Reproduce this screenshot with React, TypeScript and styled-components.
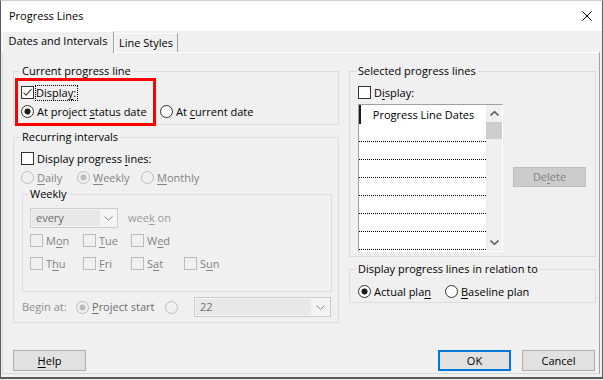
import React from "react";
import styled, { createGlobalStyle, css } from "styled-components";

const FONT = `"Open Sans", "Noto Sans", "Liberation Sans", sans-serif`;

const GlobalStyle = createGlobalStyle`
  html, body { margin: 0; padding: 0; background: #ececec; }
  body { font-family: ${FONT}; font-size: 11px; line-height: 14px; color: #000; }
  * { box-sizing: border-box; }
`;

const Window = styled.div`
  width: 603px;
  height: 379px;
  display: flex;
  flex-direction: column;
  border: 1px solid #5c5c5c;
  border-top-color: #cfcfcf;
  border-bottom-width: 2px;
  background: #f0f0f0;
`;

const TitleBar = styled.div`
  height: 30px;
  flex: none;
  background: #ffffff;
  display: flex;
  align-items: center;
  padding-left: 8px;
`;

const Title = styled.div`
  font-size: 11px;
  color: #000;
`;

const CloseButton = styled.div`
  margin-left: auto;
  width: 30px;
  height: 30px;
  display: flex;
  align-items: center;
  justify-content: center;
`;

const Body = styled.div`
  flex: 1;
  display: flex;
  flex-direction: column;
  padding-left: 1px;
`;

const TabStrip = styled.div`
  height: 21px;
  flex: none;
  display: flex;
  align-items: flex-end;
`;

const Tab = styled.div<{ $active?: boolean }>`
  display: flex;
  align-items: center;
  justify-content: center;
  background: #f0f0f0;
  border: 1px solid #ffffff;
  border-right-color: #a0a0a0;
  border-bottom: none;
  white-space: nowrap;
  color: #000;
  ${(p) =>
    p.$active
      ? css`
          width: 112px;
          height: 22px;
          margin-bottom: -1px;
          padding-bottom: 3px;
          position: relative;
          z-index: 1;
        `
      : css`
          width: 64px;
          height: 19px;
        `}
`;

const TabPage = styled.div`
  width: 598px;
  height: 322px;
  flex: none;
  border: 1px solid #d9d9d9;
  border-top-color: #ffffff;
  border-right-color: #a0a0a0;
  display: flex;
  flex-direction: column;
  padding: 11px 3px 2px 10px;
`;

const Columns = styled.div`
  display: flex;
  gap: 10px;
`;

const LeftColumn = styled.div`
  width: 326px;
  display: flex;
  flex-direction: column;
  gap: 5px;
  position: relative;
`;

const RightColumn = styled.div`
  width: 247px;
  display: flex;
  flex-direction: column;
  gap: 5px;
`;

const Group = styled.fieldset<{ $pt: number; $pb: number; $pl: number; $pr?: number }>`
  margin: 0;
  min-width: 0;
  border: 1px solid #dcdcdc;
  padding: ${(p) => p.$pt}px ${(p) => p.$pr ?? 6}px ${(p) => p.$pb}px ${(p) => p.$pl}px;
`;

const SubGroup = styled(Group)`
  margin: 0 0 0 1px;
`;

const Legend = styled.legend<{ $ml: number }>`
  padding: 0 2px;
  margin-left: ${(p) => p.$ml}px;
  line-height: 14px;
  font-size: 11px;
  color: #000;
`;

const Row = styled.div<{ $h?: number; $mt?: number }>`
  display: flex;
  align-items: center;
  height: ${(p) => p.$h ?? 19}px;
  margin-top: ${(p) => p.$mt ?? 0}px;
`;

const Option = styled.div<{ $w?: number; $tone?: "normal" | "disabled" | "dim" }>`
  display: flex;
  align-items: center;
  gap: 3px;
  flex: none;
  width: ${(p) => (p.$w ? `${p.$w}px` : "auto")};
  white-space: nowrap;
  color: ${(p) => (p.$tone === "disabled" ? "#838383" : p.$tone === "dim" ? "#6d6d6d" : "#000")};
`;

const Acc = styled.span`
  text-decoration: underline;
  text-underline-offset: 2px;
`;

const FocusLabel = styled.span`
  outline: 1px dotted #000;
  outline-offset: 0;
  padding: 0 1px 0 0;
  margin-left: -1px;
  line-height: 14px;
`;

const CheckBox = styled.span<{ $disabled?: boolean }>`
  width: 13px;
  height: 13px;
  flex: none;
  border: 1px solid ${(p) => (p.$disabled ? "#bcbcbc" : "#333333")};
  background: ${(p) => (p.$disabled ? "#f0f0f0" : "#ffffff")};
  display: flex;
  align-items: center;
  justify-content: center;
`;

const Radio = styled.span<{ $checked?: boolean; $disabled?: boolean }>`
  width: 13px;
  height: 13px;
  flex: none;
  border-radius: 50%;
  border: 1px solid ${(p) => (p.$disabled ? "#bcbcbc" : "#333333")};
  background: ${(p) => {
    const bg = p.$disabled ? "#f0f0f0" : "#ffffff";
    const dot = p.$disabled ? "#bcbcbc" : "#1a1a1a";
    return p.$checked
      ? `radial-gradient(circle at center, ${dot} 0 2.7px, ${bg} 3.4px)`
      : bg;
  }};
`;

const PlainText = styled.span<{ $color?: string; $w?: number; $ml?: number }>`
  color: ${(p) => p.$color ?? "#000"};
  width: ${(p) => (p.$w ? `${p.$w}px` : "auto")};
  margin-left: ${(p) => p.$ml ?? 0}px;
  flex: none;
  white-space: nowrap;
`;

const Combo = styled.div<{ $w: number }>`
  width: ${(p) => p.$w}px;
  height: 20px;
  flex: none;
  border: 1px solid #cccccc;
  background: #f4f4f4;
  display: flex;
  padding: 1px 0 1px 1px;
`;

const ComboField = styled.div`
  flex: 1;
  background: #e8e8e8;
  color: #6d6d6d;
  padding-left: 4px;
  display: flex;
  align-items: center;
`;

const ComboArrow = styled.div<{ $w: number }>`
  width: ${(p) => p.$w}px;
  flex: none;
  display: flex;
  align-items: center;
  justify-content: center;
`;

const DayRows = styled.div`
  margin-top: 1px;
`;

const DayRow = styled.div`
  display: grid;
  grid-template-columns: 53px 48px 53px auto;
  height: 23px;
  align-items: center;
`;

const ListRow = styled.div`
  display: flex;
  align-items: flex-start;
  gap: 10px;
  margin-top: 2px;
`;

const Table = styled.div`
  width: 145px;
  height: 148px;
  flex: none;
  display: flex;
  border: 1px solid;
  border-color: #a0a0a0 #ffffff #ffffff #a0a0a0;
  background: #ffffff;
`;

const DataColumn = styled.div`
  width: 127px;
  display: flex;
  flex-direction: column;
`;

const HeaderCell = styled.div`
  height: 19px;
  flex: none;
  border-left: 2px solid #1a1a1a;
  display: flex;
  align-items: center;
  justify-content: center;
  white-space: nowrap;
`;

const DataRow = styled.div`
  height: 18px;
  flex: none;
  border-bottom: 1px dotted #000000;
`;

const ScrollBar = styled.div`
  width: 16px;
  background: #f0f0f0;
  display: flex;
  flex-direction: column;
`;

const ScrollButton = styled.div`
  height: 17px;
  flex: none;
  display: flex;
  align-items: center;
  justify-content: center;
`;

const ScrollThumb = styled.div`
  height: 17px;
  flex: none;
  background: #cdcdcd;
`;

const ScrollTrack = styled.div`
  flex: 1;
`;

const Button = styled.div<{ $variant?: "default" | "disabled"; $h?: number; $mt?: number }>`
  width: 73px;
  height: ${(p) => p.$h ?? 21}px;
  margin-top: ${(p) => p.$mt ?? 0}px;
  flex: none;
  display: flex;
  align-items: center;
  justify-content: center;
  background: #e1e1e1;
  border: 1px solid #adadad;
  color: #000;
  ${(p) =>
    p.$variant === "default" &&
    css`
      border: 2px solid #0078d7;
    `}
  ${(p) =>
    p.$variant === "disabled" &&
    css`
      background: #cccccc;
      border-color: #bfbfbf;
      color: #838383;
    `}
`;

const ButtonRow = styled.div`
  margin-top: auto;
  display: flex;
  align-items: center;
  padding-right: 1px;
  gap: 11px;
`;

const Spacer = styled.div`
  flex: 1;
`;

const Highlight = styled.div`
  position: absolute;
  left: 2px;
  top: 14px;
  width: 141px;
  height: 48px;
  border: 3px solid #ff0000;
  pointer-events: none;
`;

const Check = () => (
  <svg width="11" height="11" viewBox="0 0 11 11">
    <polyline points="1.5,5.5 4,8.2 9.5,2.2" fill="none" stroke="#3c3c3c" strokeWidth="1.1" />
  </svg>
);

const Chevron = ({ up, color = "#8a8a8a", w = 1 }: { up?: boolean; color?: string; w?: number }) => (
  <svg width="9" height="5" viewBox="0 0 9 5">
    <polyline
      points={up ? "0.5,4.5 4.5,0.7 8.5,4.5" : "0.5,0.5 4.5,4.3 8.5,0.5"}
      fill="none"
      stroke={color}
      strokeWidth={w}
    />
  </svg>
);

const days: [string, string, string][][] = [
  [
    ["M", "o", "n"],
    ["", "T", "ue"],
    ["W", "e", "d"],
  ],
  [
    ["T", "h", "u"],
    ["", "F", "ri"],
    ["S", "a", "t"],
    ["S", "u", "n"],
  ],
];

export default function App() {
  return (
    <>
      <GlobalStyle />
      <Window>
        <TitleBar>
          <Title>Progress Lines</Title>
          <CloseButton>
            <svg width="10" height="10" viewBox="0 0 10 10">
              <path d="M0.5 0.5 L9.5 9.5 M9.5 0.5 L0.5 9.5" stroke="#000" strokeWidth="1" />
            </svg>
          </CloseButton>
        </TitleBar>
        <Body>
          <TabStrip>
            <Tab $active>Dates and Intervals</Tab>
            <Tab>Line Styles</Tab>
          </TabStrip>
          <TabPage>
            <Columns>
              <LeftColumn>
                <Group $pt={5} $pb={3} $pl={7}>
                  <Legend $ml={-1}>Current progress line</Legend>
                  <Row>
                    <Option>
                      <CheckBox>
                        <Check />
                      </CheckBox>
                      <FocusLabel>
                        Displa<Acc>y</Acc>:
                      </FocusLabel>
                    </Option>
                  </Row>
                  <Row>
                    <Option $w={139}>
                      <Radio $checked />
                      <span>
                        At project <Acc>s</Acc>tatus date
                      </span>
                    </Option>
                    <Option>
                      <Radio />
                      <span>
                        At <Acc>c</Acc>urrent date
                      </span>
                    </Option>
                  </Row>
                </Group>
                <Group $pt={5} $pb={5} $pl={7}>
                  <Legend $ml={-1}>Recurring intervals</Legend>
                  <Row>
                    <Option>
                      <CheckBox />
                      <span>
                        Display progress <Acc>l</Acc>ines:
                      </span>
                    </Option>
                  </Row>
                  <Row>
                    <Option $w={56} $tone="disabled">
                      <Radio $disabled />
                      <span>
                        <Acc>D</Acc>aily
                      </span>
                    </Option>
                    <Option $w={64} $tone="disabled">
                      <Radio $disabled $checked />
                      <span>
                        <Acc>W</Acc>eekly
                      </span>
                    </Option>
                    <Option $tone="disabled">
                      <Radio $disabled />
                      <span>
                        <Acc>M</Acc>onthly
                      </span>
                    </Option>
                  </Row>
                  <SubGroup as="fieldset" $pt={7} $pb={16} $pl={7} $pr={0}>
                    <Legend $ml={-2}>Weekly</Legend>
                    <Row $h={20}>
                      <Combo $w={88}>
                        <ComboField>every</ComboField>
                        <ComboArrow $w={17}>
                          <Chevron />
                        </ComboArrow>
                      </Combo>
                      <PlainText $color="#9a9a9a" $ml={10}>
                        wee<Acc>k</Acc> on
                      </PlainText>
                    </Row>
                    <DayRows>
                      {days.map((row, ri) => (
                        <DayRow key={ri}>
                          {row.map(([a, k, b], ci) => (
                            <Option key={ci} $tone="disabled">
                              <CheckBox $disabled />
                              <span>
                                {a}
                                <Acc>{k}</Acc>
                                {b}
                              </span>
                            </Option>
                          ))}
                        </DayRow>
                      ))}
                    </DayRows>
                  </SubGroup>
                  <Row $h={20} $mt={5}>
                    <PlainText $color="#8f8f8f" $w={54} $ml={1}>
                      Begin at:
                    </PlainText>
                    <Option $w={89} $tone="dim">
                      <Radio $disabled $checked />
                      <span>
                        <Acc>P</Acc>roject start
                      </span>
                    </Option>
                    <Option $w={29}>
                      <Radio $disabled />
                    </Option>
                    <Combo $w={137}>
                      <ComboField>22</ComboField>
                      <ComboArrow $w={19}>
                        <Chevron />
                      </ComboArrow>
                    </Combo>
                  </Row>
                </Group>
                <Highlight />
              </LeftColumn>
              <RightColumn>
                <Group $pt={5} $pb={4} $pl={8}>
                  <Legend $ml={-2}>Selected progress lines</Legend>
                  <Row>
                    <Option>
                      <CheckBox />
                      <span>
                        D<Acc>i</Acc>splay:
                      </span>
                    </Option>
                  </Row>
                  <ListRow>
                    <Table>
                      <DataColumn>
                        <HeaderCell>Progress Line Dates</HeaderCell>
                        {Array.from({ length: 7 }).map((_, i) => (
                          <DataRow key={i} />
                        ))}
                      </DataColumn>
                      <ScrollBar>
                        <ScrollButton>
                          <Chevron up color="#606060" w={1.6} />
                        </ScrollButton>
                        <ScrollThumb />
                        <ScrollTrack />
                        <ScrollButton>
                          <Chevron color="#606060" w={1.6} />
                        </ScrollButton>
                      </ScrollBar>
                    </Table>
                    <Button $variant="disabled" $h={20} $mt={63}>
                      <span>
                        De<Acc>l</Acc>ete
                      </span>
                    </Button>
                  </ListRow>
                </Group>
                <Group $pt={6} $pb={1} $pl={8}>
                  <Legend $ml={-2}>Display progress lines in relation to</Legend>
                  <Row>
                    <Option $w={87}>
                      <Radio $checked />
                      <span>
                        Actual pla<Acc>n</Acc>
                      </span>
                    </Option>
                    <Option>
                      <Radio />
                      <span>
                        <Acc>B</Acc>aseline plan
                      </span>
                    </Option>
                  </Row>
                </Group>
              </RightColumn>
            </Columns>
            <ButtonRow>
              <Button>
                <span>
                  <Acc>H</Acc>elp
                </span>
              </Button>
              <Spacer />
              <Button $variant="default">OK</Button>
              <Button>Cancel</Button>
            </ButtonRow>
          </TabPage>
        </Body>
      </Window>
    </>
  );
}
